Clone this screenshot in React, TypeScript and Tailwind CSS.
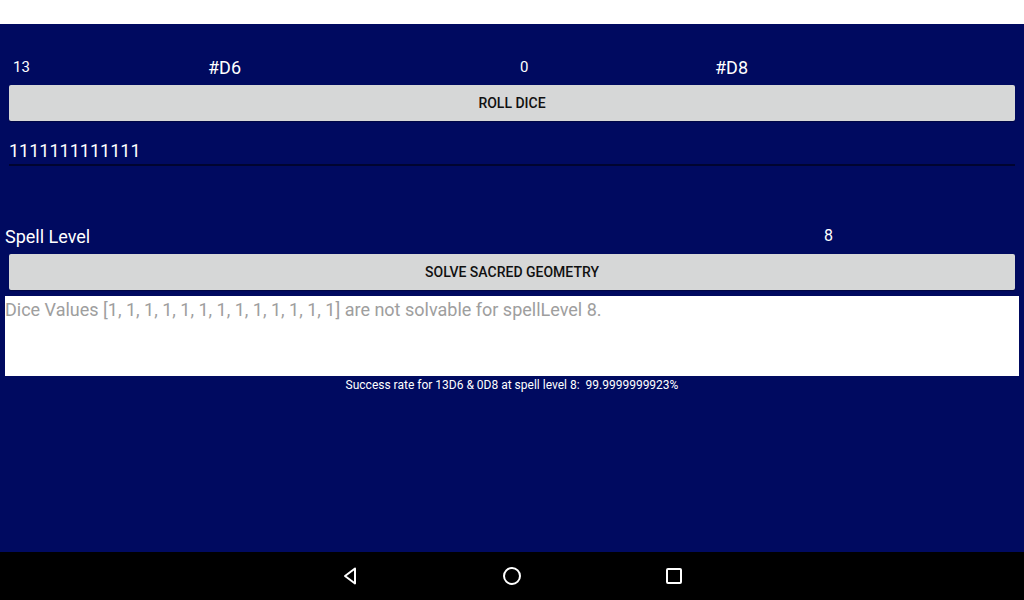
export default function App() {
  return (
    <div className="w-[1024px] h-[600px] flex flex-col bg-[#000a60] font-['Roboto',sans-serif] text-white overflow-hidden">
      <div className="h-[24px] bg-white shrink-0" />
      <main className="flex-1 flex flex-col">
        <div className="grid grid-cols-[208px_311px_196px_1fr] items-center mt-[32px] h-[22px]">
          <span className="pl-[13px] text-[15px] leading-none">13</span>
          <span className="text-[18px] leading-none translate-y-[1px]">#D6</span>
          <span className="pl-[1px] text-[15px] leading-none">0</span>
          <span className="text-[18px] leading-none translate-y-[1px]">#D8</span>
        </div>
        <button className="mx-[9px] mt-[7px] h-[36px] rounded-[2px] bg-[#d6d7d7] text-[14px] font-medium text-[#111] shadow-[0_1px_1px_rgba(0,0,0,0.3)]">
          ROLL DICE
        </button>
        <div className="mx-[9px] mt-[17px] h-[28px] border-b-2 border-[#000430] text-[18px] leading-[26px]">
          1111111111111
        </div>
        <div className="flex items-center mt-[58px] h-[24px]">
          <span className="pl-[5px] w-[824px] text-[18px] leading-none translate-y-[1px]">Spell Level</span>
          <span className="text-[16px] leading-none">8</span>
        </div>
        <button className="mx-[9px] mt-[6px] h-[36px] rounded-[2px] bg-[#d6d7d7] text-[14px] font-medium text-[#111] shadow-[0_1px_1px_rgba(0,0,0,0.3)]">
          SOLVE SACRED GEOMETRY
        </button>
        <div className="mx-[5px] mt-[6px] h-[80px] bg-white text-[#9e9e9e] text-[18px] leading-[28px]">
          Dice Values [1, 1, 1, 1, 1, 1, 1, 1, 1, 1, 1, 1, 1] are not solvable for spellLevel 8.
        </div>
        <p className="text-center text-[12px] leading-[16px] mt-[1px]">
          Success rate for 13D6 &amp; 0D8 at spell level 8:&nbsp; 99.9999999923%
        </p>
      </main>
      <nav className="h-[48px] bg-black shrink-0 flex items-center justify-center gap-[138px]">
        <svg width="24" height="24" viewBox="0 0 24 24" fill="none" stroke="white" strokeWidth="2" strokeLinejoin="round">
          <path d="M17 4.5 L7 12 L17 19.5 Z" />
        </svg>
        <svg width="24" height="24" viewBox="0 0 24 24" fill="none" stroke="white" strokeWidth="2">
          <circle cx="12" cy="12" r="8" />
        </svg>
        <svg width="24" height="24" viewBox="0 0 24 24" fill="none" stroke="white" strokeWidth="2">
          <rect x="5" y="5" width="14" height="14" rx="1" />
        </svg>
      </nav>
    </div>
  );
}
